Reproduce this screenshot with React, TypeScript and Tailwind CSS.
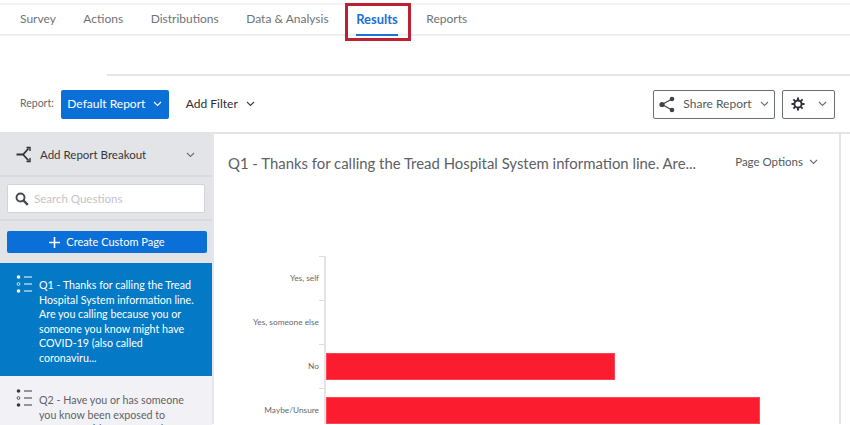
import React from 'react';

const Chevron: React.FC<{ className?: string }> = ({ className = 'text-[#6b6f73]' }) => (
  <svg width="9" height="6" viewBox="0 0 9 6" fill="none" className={className}>
    <path d="M1 1l3.5 3.5L8 1" stroke="currentColor" strokeWidth="1.1" />
  </svg>
);

const ShareIcon: React.FC = () => (
  <svg width="16" height="17" viewBox="0 0 16 17" className="text-[#404347]">
    <path d="M3 8.5L13 3M3 8.5l10 5.5" stroke="currentColor" strokeWidth="1.2" fill="none" />
    <circle cx="3" cy="8.5" r="2.6" fill="currentColor" />
    <circle cx="13" cy="3" r="2.3" fill="currentColor" />
    <circle cx="13" cy="14" r="2.3" fill="currentColor" />
  </svg>
);

const GearIcon: React.FC = () => (
  <svg width="14" height="14" viewBox="0 0 14 14" fill="none" className="text-[#2f3236]">
    <circle cx="7" cy="7" r="3.6" stroke="currentColor" strokeWidth="2" />
    <path
      d="M7 .5v2.4M7 11.1v2.4M.5 7h2.4M11.1 7h2.4M2.4 2.4l1.7 1.7M9.9 9.9l1.7 1.7M11.6 2.4L9.9 4.1M4.1 9.9l-1.7 1.7"
      stroke="currentColor"
      strokeWidth="2"
    />
  </svg>
);

const BreakoutIcon: React.FC = () => (
  <svg width="17" height="17" viewBox="0 0 17 17" fill="none" className="text-[#2f3236]">
    <path d="M0.5 8.5H7L12.5 2.5M7 8.5l5.5 6" stroke="currentColor" strokeWidth="1.8" />
    <path d="M10.5 1.5h3.5v3.5M10.5 15.5h3.5V12" stroke="currentColor" strokeWidth="1.4" />
  </svg>
);

const SearchIcon: React.FC = () => (
  <svg width="14" height="14" viewBox="0 0 14 14" fill="none" className="text-[#45484c]">
    <circle cx="5.5" cy="5.5" r="4" stroke="currentColor" strokeWidth="1.9" />
    <path d="M8.5 8.5l4.3 4.3" stroke="currentColor" strokeWidth="2.4" />
  </svg>
);

const ListIcon: React.FC<{ className: string }> = ({ className }) => (
  <svg width="18" height="18" viewBox="0 0 18 18" fill="none" className={className}>
    <circle cx="2.5" cy="2" r="1.8" fill="currentColor" />
    <circle cx="2.5" cy="9" r="1.4" stroke="currentColor" strokeWidth="0.8" />
    <circle cx="2.5" cy="16" r="1.8" fill="currentColor" />
    <path d="M8 2h8M8 9h8M8 16h8" stroke="currentColor" strokeWidth="1" />
  </svg>
);

const tabs = ['Survey', 'Actions', 'Distributions', 'Data & Analysis', 'Results', 'Reports'];

const NavBar: React.FC = () => (
  <nav className="relative mt-[3px] h-[33px] bg-white border-y-2 border-[#eeeff1] border-t-[#f4f4f5] flex items-center pl-[20px] pb-[2px] gap-[27.5px] text-[12px] leading-[16px] text-[#6f7377]">
    {tabs.map((tab) =>
      tab === 'Results' ? (
        <div key={tab} className="relative font-bold text-[13px] leading-[16px] mr-[1px] text-[#1c71d4]">
          {tab}
          <div className="absolute left-0 right-0 top-[23px] h-[2px] bg-[#1c71d4]" />
          <div className="absolute -left-[11px] -right-[13px] -top-[8px] h-[38px] border-[3px] border-[#bd1f35]" />
        </div>
      ) : (
        <div key={tab}>{tab}</div>
      ),
    )}
  </nav>
);

const Toolbar: React.FC = () => (
  <div className="h-[56px] pl-[20px] pr-[15px] flex items-center text-[12px]">
    <span className="text-[10.5px] text-[#66696d] mr-[7px]">Report:</span>
    <button className="h-[29px] w-[108px] bg-[#0b6fd8] rounded-[2px] text-white flex items-center justify-center gap-[8px]">
      Default Report <Chevron className="text-white" />
    </button>
    <button className="ml-[17px] flex items-center gap-[8px] text-[#2b2d30]">
      Add Filter <Chevron className="text-[#3b3e42]" />
    </button>
    <div className="ml-auto flex gap-[7px]">
      <button className="h-[29px] w-[122px] border border-[#6b6f73] rounded-[2px] flex items-center justify-center gap-[8px] text-[#55585c]">
        <ShareIcon /> Share Report <Chevron />
      </button>
      <button className="h-[29px] w-[53px] border border-[#6b6f73] rounded-[2px] flex items-center justify-center gap-[13px]">
        <GearIcon /> <Chevron />
      </button>
    </div>
  </div>
);

const Sidebar: React.FC = () => (
  <aside className="w-[214px] shrink-0 bg-[#e3e4e8] border-r-2 border-[#e6e7ea] text-[12px]">
    <div className="h-[43px] flex items-center pl-[16px] pr-[17px] border-b-2 border-[#d9dadd]">
      <BreakoutIcon />
      <span className="ml-[7px] text-[#34373a] text-[11.5px]">Add Report Breakout</span>
      <div className="ml-auto">
        <Chevron />
      </div>
    </div>
    <div className="h-[44px] px-[7px] pt-[7px] border-b-2 border-[#d9dadd]">
      <div className="h-[29px] bg-white border border-[#d2d3d6] rounded-[2px] flex items-center pl-[7px] gap-[5px]">
        <SearchIcon />
        <span className="text-[#c3c5c8] text-[11.5px]">Search Questions</span>
      </div>
    </div>
    <div className="h-[42px] px-[7px] pt-[10px]">
      <button className="w-[200px] h-[22px] bg-[#0b6fd8] rounded-[2px] text-white text-[11px] flex items-center justify-center gap-[6px]">
        <svg width="11" height="11" viewBox="0 0 11 11">
          <path d="M5.5 0v11M0 5.5h11" stroke="currentColor" strokeWidth="1.6" />
        </svg>
        Create Custom Page
      </button>
    </div>
    <div className="h-[113px] bg-[#047ac6] text-white relative pl-[39px] pr-[12px] pt-[15px] text-[10.7px] leading-[14.6px]">
      <ListIcon className="absolute left-[16px] top-[12px] text-white" />
      Q1 - Thanks for calling the Tread Hospital System information line. Are you calling because you or someone you know might have COVID-19 (also called coronaviru...
    </div>
    <div className="h-[60px] bg-[#f2f2f6] text-[#5f6266] relative pl-[39px] pr-[12px] pt-[17px] text-[10.7px] leading-[14.6px] overflow-hidden">
      <ListIcon className="absolute left-[16px] top-[13px] text-[#36393c]" />
      Q2 - Have you or has someone you know been exposed to someone with a suspected
    </div>
  </aside>
);

const rows = [
  { label: 'Yes, self', width: 0 },
  { label: 'Yes, someone else', width: 0 },
  { label: 'No', width: 289 },
  { label: 'Maybe/Unsure', width: 434 },
];

const Chart: React.FC = () => (
  <div className="mt-[77px] ml-[6px] flex flex-col">
    {rows.map((row) => (
      <div key={row.label} className="h-[44px] flex items-center shrink-0">
        <div className="w-[104px] pr-[5px] pt-[1px] text-right text-[8.3px] text-[#66696d] whitespace-nowrap">{row.label}</div>
        <div className="relative h-full flex items-center border-l-2 border-[#e4e4e6]">
          <div className="absolute -left-[7px] top-0 w-[5px] h-px bg-[#dcdcde]" />
          {row.width > 0 && (
            <div
              className="h-[27px] bg-[#fb1c2f] border border-[#ff4455]"
              style={{ width: row.width }}
            />
          )}
        </div>
      </div>
    ))}
  </div>
);

const MainPanel: React.FC = () => (
  <main className="w-[627px] shrink-0 bg-white border-r-2 border-[#e4e4e6] overflow-hidden">
    <div className="h-[45px] pl-[14px] pr-[21px] pt-[18px] flex items-start justify-between">
      <h1 className="text-[14.9px] leading-[22px] text-[#5d6064]">
        Q1 - Thanks for calling the Tread Hospital System information line. Are...
      </h1>
      <div className="flex items-center gap-[6px] mt-[1px] text-[11.5px] leading-[18px] text-[#55585c]">
        Page Options <Chevron />
      </div>
    </div>
    <Chart />
  </main>
);

export default function App() {
  return (
    <div className="w-[850px] h-[425px] overflow-hidden bg-white font-['Lato','Noto_Sans',sans-serif]">
      <NavBar />
      <div className="h-[40px] flex items-end">
        <div className="ml-[107px] flex-1 h-[2px] bg-[#e6e6e8]" />
      </div>
      <Toolbar />
      <div className="flex h-[292px] border-t-2 border-[#e4e4e6]">
        <Sidebar />
        <MainPanel />
      </div>
    </div>
  );
}
